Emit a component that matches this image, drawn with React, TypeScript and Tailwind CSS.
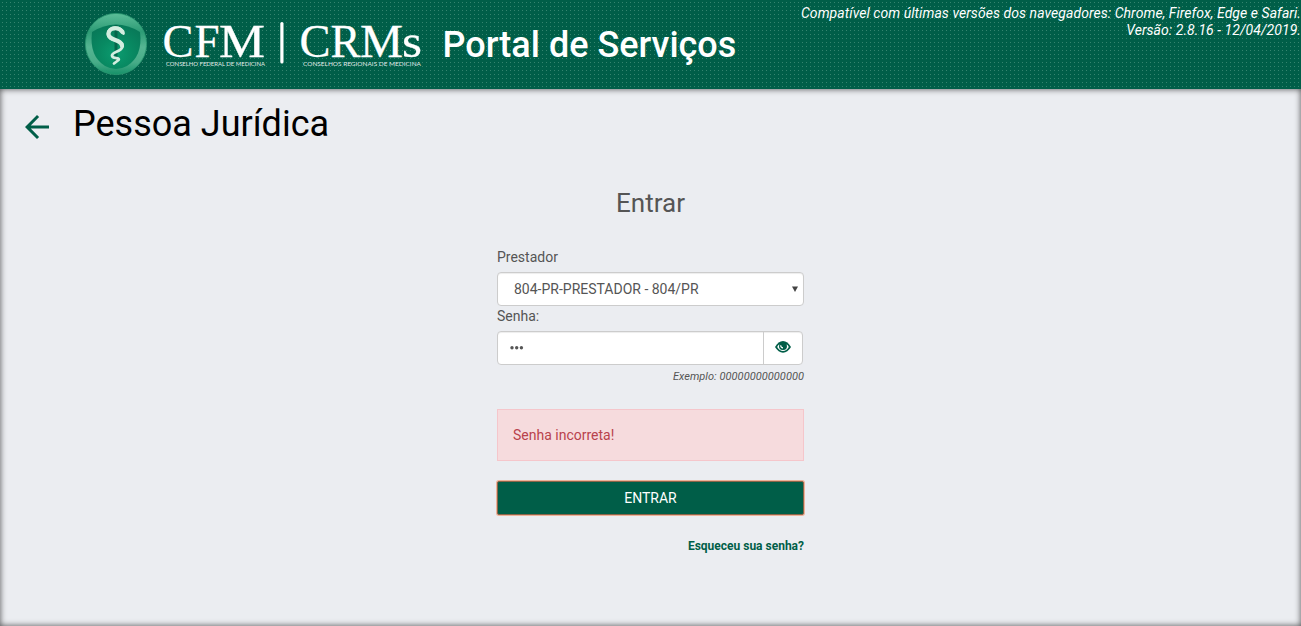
function Emblem() {
  return (
    <svg width="64" height="64" viewBox="0 0 64 64" className="shrink-0">
      <defs>
        <linearGradient id="rim" x1="0" y1="0" x2="0" y2="1">
          <stop offset="0" stopColor="#5cbd98" />
          <stop offset="0.3" stopColor="#2c9b75" />
          <stop offset="0.55" stopColor="#55b592" />
          <stop offset="0.8" stopColor="#48ac88" />
          <stop offset="1" stopColor="#159068" />
        </linearGradient>
        <radialGradient id="shield" cx="0.5" cy="0.65" r="0.65">
          <stop offset="0" stopColor="#0b9c70" />
          <stop offset="0.5" stopColor="#088a62" />
          <stop offset="1" stopColor="#087a59" />
        </radialGradient>
      </defs>
      <circle cx="32" cy="32" r="30.6" fill="url(#rim)" stroke="#2b9871" strokeWidth="0.8" />
      <path d="M8 20Q32 5 56 20Q59 44 43 54Q32 60 21 54Q5 44 8 20Z" fill="url(#shield)" />
      <path d="M32 13V50" stroke="#04664a" strokeWidth="3" />
      <path d="M39.500 21.500C38 13.500 24 14 24 22C24 30 39.500 27 38.500 34.500C37.500 40 28 39.500 28 43.500C28 47.500 36.500 45 34.500 48L30 51.500" fill="none" stroke="#d3eee0" strokeWidth="2.800" strokeLinecap="round" strokeLinejoin="round" />
      <path d="M38.500 20C35 14.500 24.500 15 24.500 22C24.500 28.500 38 27.500 38 34" fill="none" stroke="#d3eee0" strokeWidth="4.200" strokeLinecap="round" />
    </svg>
  );
}

function Wordmarks() {
  return (
    <svg width="262" height="52" viewBox="0 0 262 52" className="shrink-0 overflow-visible" fill="#fff">
      <g fontFamily="'Liberation Serif', serif" fontSize="46" stroke="#fff" strokeWidth="0.3">
        <text x="0.5" y="35.700" textLength="31" lengthAdjust="spacingAndGlyphs">C</text>
        <text x="32.500" y="35.700" textLength="25" lengthAdjust="spacingAndGlyphs">F</text>
        <text x="57" y="35.700" textLength="46" lengthAdjust="spacingAndGlyphs">M</text>
        <text x="137.500" y="35.700" textLength="31" lengthAdjust="spacingAndGlyphs">C</text>
        <text x="168.500" y="35.700" textLength="30" lengthAdjust="spacingAndGlyphs">R</text>
        <text x="198" y="35.700" textLength="43" lengthAdjust="spacingAndGlyphs">M</text>
        <text x="240" y="35.700" textLength="20" lengthAdjust="spacingAndGlyphs">s</text>
      </g>
      <rect x="118.300" y="1" width="3.200" height="41.500" rx="1.500" />
      <g fontFamily="Lato, sans-serif" fontSize="6" fillOpacity="0.9">
        <text x="4" y="45" textLength="99" lengthAdjust="spacingAndGlyphs">CONSELHO FEDERAL DE MEDICINA</text>
        <text x="141" y="45" textLength="118" lengthAdjust="spacingAndGlyphs">CONSELHOS REGIONAIS DE MEDICINA</text>
      </g>
    </svg>
  );
}

export default function App() {
  return (
    <div className="flex h-[626px] w-full flex-col overflow-hidden bg-[#ebedf1] font-[Roboto,sans-serif] text-sm leading-5 text-[#555]">
      <header className="flex h-[89px] shrink-0 justify-between bg-[#005e48] bg-[radial-gradient(circle_at_2.5px_2.5px,#34846e_0.7px,transparent_0.8px)] bg-[size:4px_4px] text-white">
        <div className="flex pl-[84px] pt-3">
          <Emblem />
          <div className="ml-[14px] mt-[9px]"><Wordmarks /></div>
          <h1 className="ml-[18.6px] mt-[13px] text-[36px] font-medium leading-10 whitespace-nowrap">Portal de Serviços</h1>
        </div>
        <p className="pt-[5px] text-right text-[14px] italic leading-[17px] tracking-[0.055px] whitespace-nowrap">
          Compatível com últimas versões dos navegadores: Chrome, Firefox, Edge e Safari.<br />Versão: 2.8.16 - 12/04/2019.
        </p>
      </header>
      <main className="flex-1 shadow-[inset_0_0_6px_#000000b0]">
        <div className="flex pl-[19px] pt-[14px]">
          <svg width="36" height="36" viewBox="0 0 24 24" className="mt-[6px]" fill="#005e48">
            <path d="M20 11H7.83l5.59-5.59L12 4l-8 8 8 8 1.41-1.41L7.83 13H20v-2z" />
          </svg>
          <h2 className="ml-[18px] mt-px text-[36px] leading-10 text-black">Pessoa Jurídica</h2>
        </div>
        <form className="mx-auto mt-[40px] flex w-[307px] flex-col" onSubmit={(e) => e.preventDefault()}>
          <h3 className="text-center text-[26px] leading-[36px]">Entrar</h3>
          <label className="mt-[26px]">Prestador</label>
          <button type="button" className="mt-[5px] flex h-[34px] items-center justify-between rounded-[4px] border border-[#ccc] bg-white pl-4 pr-[5px] shadow-[inset_0_1px_1px_rgba(0,0,0,0.075)]">
            <span>804-PR-PRESTADOR - 804/PR</span>
            <svg width="6" height="7" viewBox="0 0 6 7" fill="#444"><path d="M0 0.5H6L3 6Z" /></svg>
          </button>
          <label>Senha:</label>
          <div className="mt-[5px] flex h-[34px] w-[306px] rounded-[4px] border border-[#ccc] bg-white shadow-[inset_0_1px_1px_rgba(0,0,0,0.075)]">
            <div className="flex flex-1 items-center pl-3">
              <svg width="14" height="4" viewBox="0 0 14 4" fill="#555"><circle cx="2" cy="1.800" r="1.7" /><circle cx="6.700" cy="1.800" r="1.7" /><circle cx="11.400" cy="1.800" r="1.7" /></svg>
            </div>
            <div className="flex w-[39px] justify-center border-l border-[#ccc] pt-[9px]">
              <svg width="16" height="12" viewBox="0 0 16 12">
                <path d="M0 6Q3.400 0 8 0T16 6Q12.600 11.700 8 11.700T0 6Z" fill="#005e48" />
                <path d="M2.200 6Q2.800 4.300 4.300 3.300Q3 9.100 8 9.100T11.700 3.300Q13.200 4.300 13.800 6Q11.500 9.900 8 9.900T2.200 6Z" fill="#fff" />
                <path d="M5.700 4.300Q5.700 6.900 8 6.900" fill="none" stroke="#fff" strokeWidth="1.100" />
              </svg>
            </div>
          </div>
          <p className="mt-[4px] text-right text-[11px] italic leading-4 tracking-[0.04px]">Exemplo: 00000000000000</p>
          <div className="mt-6 flex h-[52px] items-center border border-[#f5c6cb] bg-[#f6dbdd] px-[15px] text-[#b9424c]">Senha incorreta!</div>
          <button className="mt-5 h-[34px] rounded-[2px] border border-[#8b6549] bg-[#005e48] text-white shadow-[0_0_0_1px_#efb299]">ENTRAR</button>
          <a href="#senha" className="mt-[21px] self-end text-xs font-bold leading-5 text-[#005e48]">Esqueceu sua senha?</a>
        </form>
      </main>
    </div>
  );
}
